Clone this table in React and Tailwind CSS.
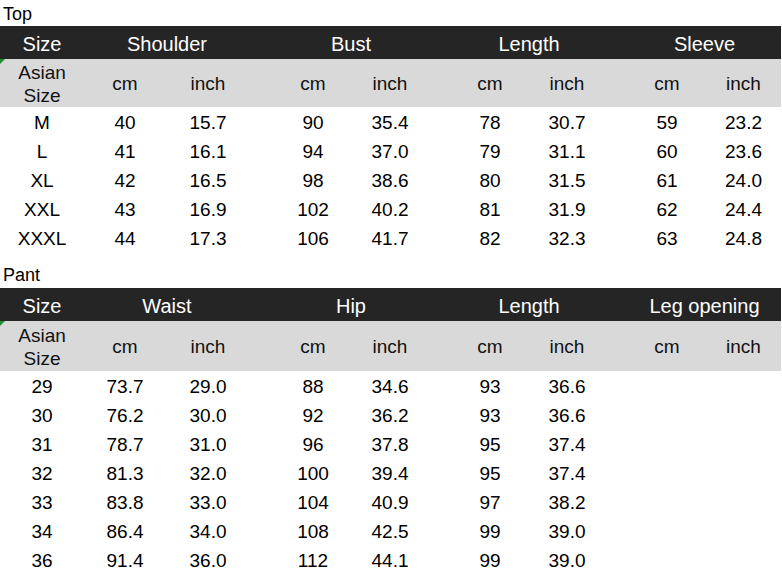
import React from "react";

const COLS = "grid grid-cols-[84px_82px_84px_24px_78px_76px_24px_76px_78px_22px_78px_75px] w-[781px]";

function Table({ label, labelH, groups, grayH, rows }) {
  return (
    <div>
      <div className={`${labelH} flex items-end pl-[3px] text-[18px] leading-[22px] text-black`}>{label}</div>
      <div className={`${COLS} h-[33px] pt-[2px] items-center bg-[#252525] text-white text-[20px]`}>
        <div className="text-center">Size</div>
        <div className="col-span-2 text-center">{groups[0]}</div>
        <div />
        <div className="col-span-2 text-center">{groups[1]}</div>
        <div />
        <div className="col-span-2 text-center">{groups[2]}</div>
        <div />
        <div className="col-span-2 text-center">{groups[3]}</div>
      </div>
      <div className={`${COLS} ${grayH} items-center bg-[#d9d9d9] text-[#111] text-[19px] leading-[23px]`}>
        <div className="relative h-full flex flex-col justify-center items-center pt-[1px]">
          <span className="absolute left-0 top-0 w-0 h-0 border-t-[5px] border-t-[#1f8f3a] border-r-[5px] border-r-transparent" />
          <span>Asian</span>
          <span>Size</span>
        </div>
        <div className="text-center pt-[1px]">cm</div>
        <div className="text-center pt-[1px]">inch</div>
        <div />
        <div className="text-center pt-[1px]">cm</div>
        <div className="text-center pt-[1px]">inch</div>
        <div />
        <div className="text-center pt-[1px]">cm</div>
        <div className="text-center pt-[1px]">inch</div>
        <div />
        <div className="text-center pt-[1px]">cm</div>
        <div className="text-center pt-[1px]">inch</div>
      </div>
      {rows.map((r, i) => (
        <div key={i} className={`${COLS} h-[29px] pt-[2px] items-center text-black text-[19px]`}>
          <div className="text-center">{r[0]}</div>
          <div className="text-center">{r[1]}</div>
          <div className="text-center">{r[2]}</div>
          <div />
          <div className="text-center">{r[3]}</div>
          <div className="text-center">{r[4]}</div>
          <div />
          <div className="text-center">{r[5]}</div>
          <div className="text-center">{r[6]}</div>
          <div />
          <div className="text-center">{r[7] || ""}</div>
          <div className="text-center">{r[8] || ""}</div>
        </div>
      ))}
    </div>
  );
}

export default function App() {
  const top = [
    ["M", "40", "15.7", "90", "35.4", "78", "30.7", "59", "23.2"],
    ["L", "41", "16.1", "94", "37.0", "79", "31.1", "60", "23.6"],
    ["XL", "42", "16.5", "98", "38.6", "80", "31.5", "61", "24.0"],
    ["XXL", "43", "16.9", "102", "40.2", "81", "31.9", "62", "24.4"],
    ["XXXL", "44", "17.3", "106", "41.7", "82", "32.3", "63", "24.8"],
  ];
  const pant = [
    ["29", "73.7", "29.0", "88", "34.6", "93", "36.6"],
    ["30", "76.2", "30.0", "92", "36.2", "93", "36.6"],
    ["31", "78.7", "31.0", "96", "37.8", "95", "37.4"],
    ["32", "81.3", "32.0", "100", "39.4", "95", "37.4"],
    ["33", "83.8", "33.0", "104", "40.9", "97", "38.2"],
    ["34", "86.4", "34.0", "108", "42.5", "99", "39.0"],
    ["36", "91.4", "36.0", "112", "44.1", "99", "39.0"],
  ];
  return (
    <div className="w-[782px] h-[573px] overflow-hidden bg-white font-['Liberation_Sans',Arial,sans-serif]">
      <Table label="Top" labelH="h-[26px] pb-[1px]" groups={["Shoulder", "Bust", "Length", "Sleeve"]} grayH="h-[48px]" rows={top} />
      <Table label="Pant" labelH="h-[36px] pb-[2px]" groups={["Waist", "Hip", "Length", "Leg opening"]} grayH="h-[50px]" rows={pant} />
    </div>
  );
}
